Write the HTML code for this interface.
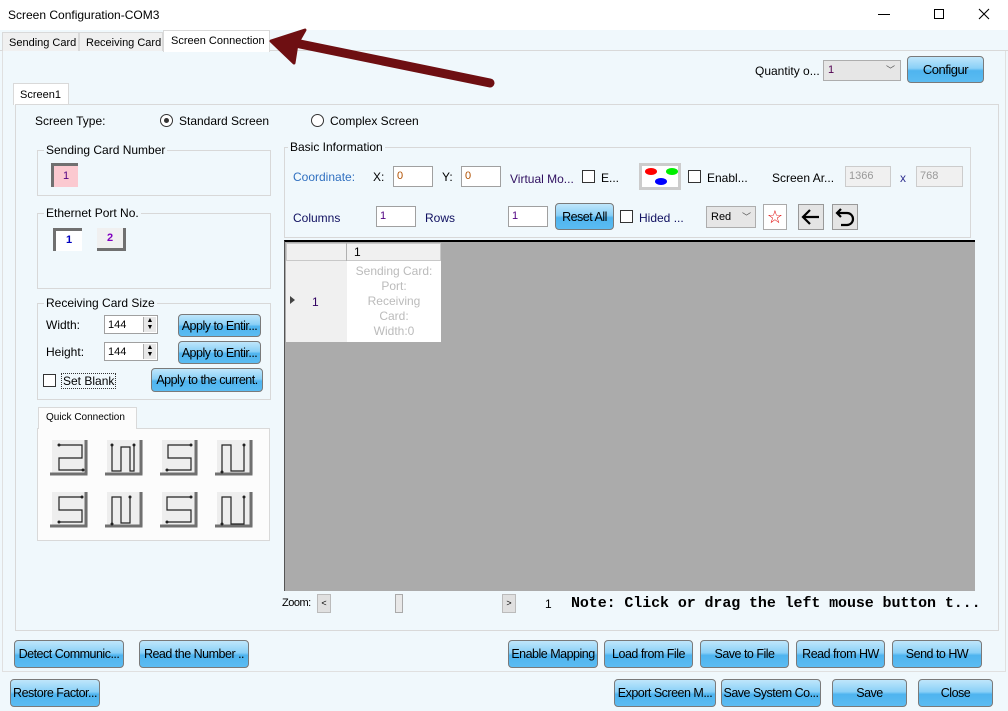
<!DOCTYPE html>
<html><head><meta charset="utf-8">
<style>
*{box-sizing:border-box;margin:0;padding:0}
body{width:1008px;height:711px;overflow:hidden;background:#f0f8fc;font-family:"Liberation Sans",Arial,sans-serif;font-size:12px;color:#000;position:relative}
.a{position:absolute;white-space:nowrap}
.btn{position:absolute;border:1px solid #7a7a7a;border-radius:4px;background:linear-gradient(#bfe6fb 0%,#8ad0f7 45%,#4fb4ef 55%,#5bbcf2 100%);text-align:center;font-size:12.5px;letter-spacing:-0.5px;display:flex;align-items:center;justify-content:center;color:#000;overflow:hidden}
.grp{position:absolute;border:1px solid #d8d8d8}
.gl{position:absolute;background:#f0f8fc;padding:0 2px;top:-8px;left:6px;font-size:12px}
.inp{position:absolute;background:#fff;border:1px solid #a0a0a0;font-size:11px;padding-left:3px;line-height:18px}
.cb{position:absolute;width:13px;height:13px;border:1px solid #333;background:#fff}
.sel{position:absolute;background:#e6e6e6;border:1px solid #adadad;font-size:11px;padding-left:4px}
</style></head><body>
<div class="a" style="left:0;top:0;width:1008px;height:30px;background:#fff"></div>
<div class="a" style="left:8px;top:8px;font-size:12px">Screen Configuration-COM3</div>
<div class="a" style="left:878px;top:14px;width:12px;height:1px;background:#000"></div>
<div class="a" style="left:934px;top:9px;width:10px;height:10px;border:1px solid #000"></div>
<svg class="a" style="left:978px;top:8px" width="12" height="12"><path d="M1 1L11 11M11 1L1 11" stroke="#000" stroke-width="1.1"/></svg>
<div class="a" style="left:0;top:50px;width:1008px;height:1px;background:#d9d9d9"></div>
<div class="a" style="left:2px;top:32px;width:77px;height:19px;border:1px solid #d9d9d9;border-bottom:none;background:#f0f0f0;font-size:11px;padding:4px 0 0 6px">Sending Card</div>
<div class="a" style="left:79px;top:32px;width:84px;height:19px;border:1px solid #d9d9d9;border-bottom:none;background:#f0f0f0;font-size:11px;padding:4px 0 0 6px">Receiving Card</div>
<div class="a" style="left:163px;top:30px;width:107px;height:22px;border:1px solid #d9d9d9;border-bottom:none;background:#fff;font-size:11px;padding:4px 0 0 7px">Screen Connection</div>
<div class="a" style="left:2px;top:51px;width:1004px;height:621px;border:1px solid #e0e0e0;border-top:none"></div>
<div class="a" style="left:755px;top:64px">Quantity o...</div>
<div class="sel" style="left:823px;top:60px;width:78px;height:21px;line-height:19px;color:#500050">1<span style="position:absolute;right:5px;color:#555;font-size:9px">﹀</span></div>
<div class="btn" style="left:907px;top:56px;width:77px;height:27px;font-size:13px">Configur</div>
<div class="a" style="left:13px;top:83px;width:56px;height:22px;border:1px solid #d9d9d9;border-bottom:none;background:#fff;font-size:11px;padding:5px 0 0 6px">Screen1</div>
<div class="a" style="left:15px;top:104px;width:984px;height:527px;border:1px solid #d9d9d9"></div>
<div class="a" style="left:35px;top:114px">Screen Type:</div>
<div class="a" style="left:160px;top:114px;width:13px;height:13px;border:1px solid #333;border-radius:50%;background:#fff"><div style="position:absolute;left:3px;top:3px;width:5px;height:5px;border-radius:50%;background:#333"></div></div>
<div class="a" style="left:179px;top:114px">Standard Screen</div>
<div class="a" style="left:311px;top:114px;width:13px;height:13px;border:1px solid #333;border-radius:50%;background:#fff"></div>
<div class="a" style="left:330px;top:114px">Complex Screen</div>
<div class="grp" style="left:37px;top:150px;width:234px;height:46px"><span class="gl" style="left:6px">Sending Card Number</span></div>
<div class="a" style="left:51px;top:163px;width:27px;height:24px;background:#fbc9d0;border-left:3px solid #707070;border-top:3px solid #707070;color:#500080;font-size:11px;text-align:center;line-height:20px">1</div>
<div class="grp" style="left:37px;top:213px;width:234px;height:76px"><span class="gl">Ethernet Port No.</span></div>
<div class="a" style="left:53px;top:228px;width:29px;height:23px;background:#fff;border-left:3px solid #707070;border-top:3px solid #707070;color:#0000c0;font-size:11px;font-weight:bold;text-align:center;line-height:19px">1</div>
<div class="a" style="left:97px;top:228px;width:29px;height:23px;background:#f0f0f0;border-right:3px solid #707070;border-bottom:3px solid #707070;color:#8000c0;font-size:11px;font-weight:bold;text-align:center;line-height:21px">2</div>
<div class="grp" style="left:37px;top:303px;width:234px;height:97px"><span class="gl">Receiving Card Size</span></div>
<div class="a" style="left:46px;top:318px">Width:</div>
<div class="inp" style="left:104px;top:315px;width:54px;height:19px">144</div>
<div class="a" style="left:143px;top:317px;width:13px;height:15px;background:#e8e8e8;border-left:1px solid #aaa;font-size:7px;line-height:7px;text-align:center">▲<br>▼</div>
<div class="btn" style="left:178px;top:314px;width:83px;height:23px">Apply to Entir...</div>
<div class="a" style="left:46px;top:345px">Height:</div>
<div class="inp" style="left:104px;top:342px;width:54px;height:19px">144</div>
<div class="a" style="left:143px;top:344px;width:13px;height:15px;background:#e8e8e8;border-left:1px solid #aaa;font-size:7px;line-height:7px;text-align:center">▲<br>▼</div>
<div class="btn" style="left:178px;top:341px;width:83px;height:23px">Apply to Entir...</div>
<div class="cb" style="left:43px;top:374px"></div>
<div class="a" style="left:61px;top:373px;border:1px dotted #333;padding:0 1px">Set Blank</div>
<div class="btn" style="left:151px;top:368px;width:112px;height:24px">Apply to the current.</div>
<div class="a" style="left:37px;top:428px;width:233px;height:113px;border:1px solid #d9d9d9;background:#fcfcfc"></div>
<div class="a" style="left:38px;top:407px;width:99px;height:22px;border:1px solid #d9d9d9;border-bottom:none;background:#fcfcfc;font-size:10px;padding:4px 0 0 7px">Quick Connection</div>
<svg class="a" style="left:50px;top:440px" width="215" height="90" viewBox="0 0 215 90">
<defs><g id="bx"><rect x="2" y="0" width="36" height="34" fill="#eee" stroke="none"/><path d="M36 0V34H0" stroke="#707070" stroke-width="3" fill="none"/></g></defs>
<use href="#bx" x="0" y="0"/><use href="#bx" x="55" y="0"/><use href="#bx" x="110" y="0"/><use href="#bx" x="165" y="0"/>
<use href="#bx" x="0" y="52"/><use href="#bx" x="55" y="52"/><use href="#bx" x="110" y="52"/><use href="#bx" x="165" y="52"/>
<g fill="none" stroke="#222" stroke-width="1.2">
<path d="M9 5H32V18H9V30H33"/>
<path d="M62 5V31H71V7H80V31H84V5"/>
<path d="M141 5H118V18H141V30H117"/>
<path d="M172 32V5H181V31H194V5"/>
<path d="M32 57H9V70H32V82H9"/>
<path d="M62 84V57H71V83H80V57"/>
<path d="M141 57H117V70H141V82H117"/>
<path d="M172 84V57H181V84H194V57"/>
</g>
<g fill="#222"><circle cx="9" cy="5" r="1.5"/><circle cx="33" cy="30" r="1.5"/><circle cx="62" cy="5" r="1.5"/><circle cx="84" cy="5" r="1.5"/><circle cx="141" cy="5" r="1.5"/><circle cx="117" cy="30" r="1.5"/><circle cx="172" cy="32" r="1.5"/><circle cx="194" cy="5" r="1.5"/><circle cx="32" cy="57" r="1.5"/><circle cx="9" cy="82" r="1.5"/><circle cx="62" cy="84" r="1.5"/><circle cx="80" cy="57" r="1.5"/><circle cx="141" cy="57" r="1.5"/><circle cx="117" cy="82" r="1.5"/><circle cx="172" cy="84" r="1.5"/><circle cx="194" cy="57" r="1.5"/></g>
</svg>
<div class="grp" style="left:284px;top:147px;width:687px;height:91px"><span class="gl" style="left:3px">Basic Information</span></div>
<div class="a" style="left:293px;top:170px;color:#3070c0">Coordinate:</div>
<div class="a" style="left:373px;top:170px">X:</div>
<div class="inp" style="left:393px;top:166px;width:40px;height:21px;color:#b05000">0</div>
<div class="a" style="left:442px;top:170px">Y:</div>
<div class="inp" style="left:461px;top:166px;width:40px;height:21px;color:#b05000">0</div>
<div class="a" style="left:510px;top:172px;color:#301060">Virtual Mo...</div>
<div class="cb" style="left:582px;top:170px"></div>
<div class="a" style="left:601px;top:171px">E...</div>
<div class="a" style="left:639px;top:163px;width:42px;height:27px;border:3px solid #ccc;background:#fff"><div style="position:absolute;left:3px;top:2px;width:12px;height:7px;border-radius:50%;background:#f00"></div><div style="position:absolute;left:24px;top:2px;width:12px;height:7px;border-radius:50%;background:#0e0"></div><div style="position:absolute;left:13px;top:12px;width:12px;height:7px;border-radius:50%;background:#00f"></div></div>
<div class="cb" style="left:688px;top:170px"></div>
<div class="a" style="left:707px;top:171px">Enabl...</div>
<div class="a" style="left:772px;top:171px">Screen Ar...</div>
<div class="inp" style="left:845px;top:166px;width:46px;height:21px;color:#999;background:#f0f0f0;border-color:#ccc">1366</div>
<div class="a" style="left:900px;top:171px;color:#303090">x</div>
<div class="inp" style="left:916px;top:166px;width:47px;height:21px;color:#999;background:#f0f0f0;border-color:#ccc">768</div>
<div class="a" style="left:293px;top:211px;color:#101060">Columns</div>
<div class="inp" style="left:376px;top:206px;width:40px;height:21px;color:#500080">1</div>
<div class="a" style="left:425px;top:211px;color:#101060">Rows</div>
<div class="inp" style="left:508px;top:206px;width:40px;height:21px;color:#500080">1</div>
<div class="btn" style="left:555px;top:203px;width:59px;height:27px">Reset All</div>
<div class="cb" style="left:620px;top:210px"></div>
<div class="a" style="left:639px;top:211px;color:#101060">Hided ...</div>
<div class="sel" style="left:706px;top:206px;width:50px;height:22px;line-height:20px">Red<span style="position:absolute;right:4px;color:#555;font-size:9px">﹀</span></div>
<div class="a" style="left:763px;top:204px;width:24px;height:26px;border:1px solid #aaa;background:#fff;color:#e00000;font-size:18px;text-align:center;line-height:24px">☆</div>
<div class="a" style="left:798px;top:204px;width:26px;height:26px;border:1px solid #999;background:#e4e4e4"><svg width="24" height="24"><path d="M20 12H5M11 5L4 12L11 19" stroke="#000" stroke-width="2.2" fill="none"/></svg></div>
<div class="a" style="left:832px;top:204px;width:26px;height:26px;border:1px solid #999;background:#e4e4e4"><svg width="24" height="24"><path d="M8 4L4 8L8 12M4 8H14A6 6 0 0 1 14 20H8" stroke="#000" stroke-width="2.2" fill="none"/></svg></div>
<div class="a" style="left:284px;top:240px;width:691px;height:351px;background:#ababab;border-top:2px solid #000;border-left:1px solid #555"></div>
<div class="a" style="left:286px;top:243px;width:155px;height:18px;background:#f0f0f0;border:1px solid #c8c8c8"></div>
<div class="a" style="left:346px;top:243px;width:1px;height:99px;background:#b0b0b0"></div>
<div class="a" style="left:354px;top:245px">1</div>
<div class="a" style="left:286px;top:261px;width:61px;height:81px;background:#f0f0f0"></div>
<div class="a" style="left:347px;top:261px;width:94px;height:81px;background:#fff;color:#bbb;text-align:center;line-height:15px;white-space:normal;padding-top:3px">Sending Card:<br>Port:<br>Receiving<br>Card:<br>Width:0</div>
<div class="a" style="left:290px;top:296px;width:0;height:0;border-left:5px solid #444;border-top:4px solid transparent;border-bottom:4px solid transparent"></div>
<div class="a" style="left:312px;top:295px;color:#300060">1</div>
<div class="a" style="left:282px;top:597px;font-size:11px;letter-spacing:-0.5px">Zoom:</div>
<div class="a" style="left:317px;top:594px;width:14px;height:19px;background:#e0e0e0;border:1px solid #bbb;font-size:9px;text-align:center;line-height:17px">&lt;</div>
<div class="a" style="left:395px;top:594px;width:8px;height:19px;background:#e8e8e8;border:1px solid #aaa"></div>
<div class="a" style="left:502px;top:594px;width:14px;height:19px;background:#e0e0e0;border:1px solid #bbb;font-size:9px;text-align:center;line-height:17px">&gt;</div>
<div class="a" style="left:545px;top:597px">1</div>
<div class="a" style="left:571px;top:595px;font-family:'Liberation Mono',monospace;font-size:15px;font-weight:bold;letter-spacing:-0.1px">Note: Click or drag the left mouse button t...</div>
<div class="btn" style="left:14px;top:640px;width:110px;height:28px">Detect Communic...</div>
<div class="btn" style="left:139px;top:640px;width:110px;height:28px">Read the Number ..</div>
<div class="btn" style="left:508px;top:640px;width:90px;height:28px">Enable Mapping</div>
<div class="btn" style="left:604px;top:640px;width:89px;height:28px">Load from File</div>
<div class="btn" style="left:700px;top:640px;width:89px;height:28px">Save to File</div>
<div class="btn" style="left:796px;top:640px;width:89px;height:28px">Read from HW</div>
<div class="btn" style="left:892px;top:640px;width:90px;height:28px">Send to HW</div>
<div class="btn" style="left:10px;top:679px;width:90px;height:28px">Restore Factor...</div>
<div class="btn" style="left:614px;top:679px;width:102px;height:28px">Export Screen M...</div>
<div class="btn" style="left:721px;top:679px;width:100px;height:28px">Save System Co...</div>
<div class="btn" style="left:832px;top:679px;width:75px;height:28px">Save</div>
<div class="btn" style="left:918px;top:679px;width:75px;height:28px">Close</div>
<svg class="a" style="left:0;top:0" width="1008" height="711" viewBox="0 0 1008 711">
<path d="M490 83L300 44" stroke="#6e0f12" stroke-width="9" stroke-linecap="round" fill="none"/>
<path d="M271 41L305 30L297 44L294 63Z" fill="#6e0f12" stroke="#6e0f12" stroke-width="3" stroke-linejoin="round"/>
</svg>
</body></html>
